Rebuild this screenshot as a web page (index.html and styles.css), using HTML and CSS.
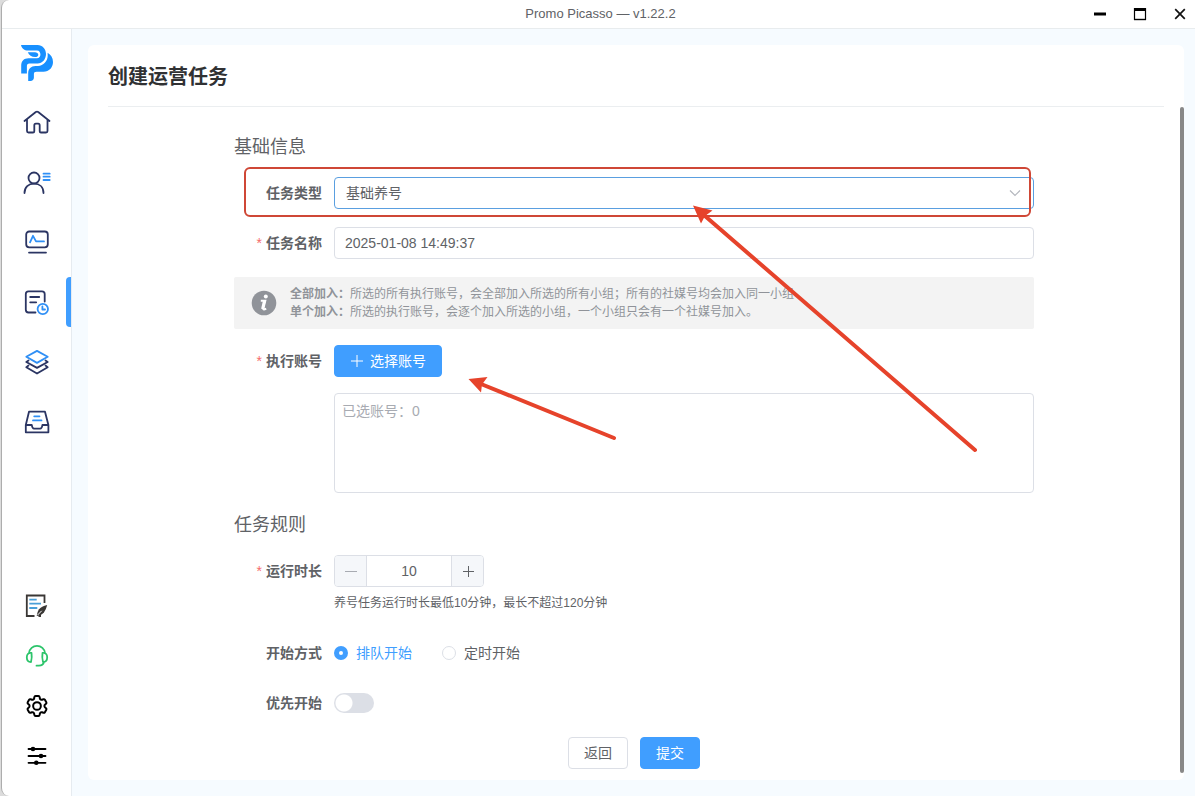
FILE: index.html
```html
<!DOCTYPE html>
<html lang="zh-CN">
<head>
<meta charset="utf-8">
<title>Promo Picasso</title>
<link rel="stylesheet" href="styles.css">
</head>
<body>
<div class="app">
  <header class="titlebar">
    <span class="titlebar-name">Promo Picasso — v1.22.2</span>
    <div class="window-controls">
      <button type="button" aria-label="最小化"><svg width="14" height="14" viewBox="0 0 14 14"><path d="M1 7h12" stroke="#000" stroke-width="3"/></svg></button>
      <button type="button" aria-label="最大化"><svg width="14" height="14" viewBox="0 0 14 14"><path d="M1.500 1v12M12.500 1v12" stroke="#000" stroke-width="1.200"/><path d="M1 12.500h12" stroke="#000" stroke-width="1.400"/><path d="M1 2.500h12" stroke="#000" stroke-width="3"/></svg></button>
      <button type="button" aria-label="关闭"><svg width="14" height="14" viewBox="0 0 14 14"><path d="M2.200 2.200l9.600 9.600M11.800 2.200l-9.600 9.600" stroke="#111" stroke-width="1.700"/></svg></button>
    </div>
  </header>
  <div class="workspace">
    <aside class="sidebar">
      <div class="logo">
        <svg width="34" height="38" viewBox="-1 -1 34 38">
          <g fill="#1890ff">
            <path d="M0 0H16.500C21.500 0 25 4 25 9S21.500 18.500 16.500 18.500H8.500C6.600 18.500 5.900 19.500 5.900 21V28.500H.2V20.500C.2 16 3 13.200 7.500 13.200H16C18.300 13.200 19.400 11.300 19.400 9.400S18.300 5.600 16 5.600H7C3.500 5.600 .6 3.500 0 0Z"/>
            <path d="M6.800 7.200H14C15.600 7.200 17.300 8.200 17.300 9.700S15.700 12 14.200 12C10.500 12 8 10.400 6.800 7.200Z"/>
            <path d="M26.600 7.800C29.900 9.700 32 13 32 17C32 22.500 28 26.700 22.500 26.700H15.500C13.700 26.700 12.900 27.500 12.900 29V32.500C12.900 34.500 11.500 36 9.500 36H7.200V28.500C7.200 24 10 21.100 14.500 21.100H17C22.500 20.800 26.500 16 26.700 11Z"/>
          </g>
        </svg>
      </div>
      <nav class="nav" aria-label="主导航">
        <a href="#home" aria-label="首页"><svg class="icon" viewBox="0 0 28 28"><path d="M1.500 13L12.800 4Q14 3.200 15.200 4L26.500 13M4 11.500V23Q4 24.500 5.500 24.500H10Q11.300 24.500 11.300 23.200V17.500Q11.300 15.700 12.800 15.700H15.200Q16.700 15.700 16.700 17.500V23.200Q16.700 24.500 18 24.500H23Q24.500 24.500 24.500 23V11.500"/></svg></a>
        <a href="#accounts" aria-label="账号"><svg class="icon" viewBox="0 0 28 28"><circle cx="11" cy="10" r="5.500"/><path d="M1.500 25C1.500 19 5.500 15.700 11 15.700S20.500 19 20.500 25"/><path class="accent" d="M20.500 5.700h6.200M20.500 8.700h6.200M20.500 12h6.200"/></svg></a>
        <a href="#monitor" aria-label="监控"><svg class="icon" viewBox="0 0 28 28"><rect x="3.200" y="3.500" width="21.600" height="15.800" rx="3"/><path d="M6 24.600h17"/><path class="accent" d="M7 14.300L10 7.800L13 13.400H21"/></svg></a>
        <a href="#tasks" aria-label="任务" class="active" aria-current="page"><svg class="icon" viewBox="0 0 28 28"><path d="M21.700 13.500V6Q21.700 3.300 19 3.300H5.500Q2.800 3.300 2.800 6V21.800Q2.800 24.500 5.500 24.500H12.500M7.200 9h9M7.200 14.300h6"/><g class="accent"><circle cx="19.800" cy="21" r="5.200"/><path d="M19.400 18.400V21.500H22"/></g></svg></a>
        <a href="#layers" aria-label="分组"><svg class="icon" viewBox="0 0 28 28"><path d="M5.500 12.500L3.300 14L14 19.900L24.700 14L22.500 12.500M5.500 17.600L3.300 19.200L14 25.500L24.700 19.200L22.500 17.600"/><path class="accent" d="M14 2.900L24.700 8.700L14 14.900L3.300 8.700Z"/></svg></a>
        <a href="#inbox" aria-label="素材"><svg class="icon" viewBox="0 0 28 28"><path d="M6 3.700H22L25.400 17V24.300H2.800V17ZM2.800 17H8.800Q9.300 20.700 11 20.700H17.200Q18.900 20.700 19.400 17H25.400"/><path class="accent" d="M11.200 8.300H16.500M10 12.400H18.500"/></svg></a>
      </nav>
      <nav class="nav-tools" aria-label="工具">
        <a href="#notes" aria-label="记录"><svg class="icon note" viewBox="0 0 28 28"><path d="M21.500 11V3.500H3.800V24H11.500M15.500 24H18"/><path class="note-lines" d="M6.300 7.700H13.700M6.300 11.700H18M6.300 16H14.300"/><path d="M24.200 13Q18.500 14 15.800 17.500Q14.300 19.800 13.600 24Q18.500 23.400 20.800 20.700Q23 18 24.200 13Z" fill="#3a3735" stroke="none"/><path d="M14.600 23L18.700 18.800" stroke="#fff" stroke-width="1"/></svg></a>
        <a href="#support" aria-label="客服"><svg class="icon support" viewBox="0 0 28 28"><path d="M6 11C6.500 6.800 9.800 3.800 14 3.800S21.500 6.800 22 11M8.500 11Q3.800 10.500 3.800 15.200Q3.800 20 8 20Q9.200 15.500 8.500 11ZM19.500 11Q24.200 10.500 24.200 15.200Q24.200 20 20 20Q18.800 15.500 19.500 11ZM21 20Q20 23.700 16 23.700H13.500"/></svg></a>
        <a href="#settings" aria-label="设置"><svg class="icon black" viewBox="-0.700 -0.700 25.400 25.400"><path d="M9.594 3.940c.09-.542.56-.94 1.110-.94h2.593c.55 0 1.020.398 1.110.94l.213 1.281c.063.374.313.686.645.87.074.04.147.083.22.127.325.196.72.257 1.075.124l1.217-.456a1.125 1.125 0 0 1 1.370.49l1.296 2.247a1.125 1.125 0 0 1-.26 1.431l-1.003.827c-.293.241-.438.613-.43.992a7.723 7.723 0 0 1 0 .255c-.008.378.137.75.43.991l1.004.827c.424.35.534.955.26 1.430l-1.298 2.247a1.125 1.125 0 0 1-1.369.491l-1.217-.456c-.355-.133-.75-.072-1.076.124a6.470 6.470 0 0 1-.22.128c-.331.183-.581.495-.644.869l-.213 1.281c-.09.543-.56.94-1.110.94h-2.594c-.55 0-1.019-.398-1.110-.94l-.213-1.281c-.062-.374-.312-.686-.644-.87a6.520 6.520 0 0 1-.22-.127c-.325-.196-.72-.257-1.076-.124l-1.217.456a1.125 1.125 0 0 1-1.369-.49l-1.297-2.247a1.125 1.125 0 0 1 .26-1.431l1.004-.827c.292-.24.437-.613.43-.991a6.932 6.932 0 0 1 0-.255c.007-.38-.138-.751-.43-.992l-1.004-.827a1.125 1.125 0 0 1-.26-1.430l1.297-2.247a1.125 1.125 0 0 1 1.370-.491l1.216.456c.356.133.751.072 1.076-.124.072-.044.146-.086.22-.128.332-.183.582-.495.644-.869l.214-1.280Z"/><circle cx="12" cy="12" r="3.500"/></svg></a>
        <a href="#filters" aria-label="选项"><svg class="icon black" viewBox="0 0 28 28"><path d="M5.500 7H22.500M5.500 14H22.500M5.500 20.800H22.500"/><g fill="#000" stroke="none"><circle cx="10" cy="7" r="2.300"/><circle cx="18" cy="14" r="2.300"/><circle cx="13.300" cy="20.800" r="2.300"/></g></svg></a>
      </nav>
    </aside>
    <main class="main">
      <section class="card">
        <h1 class="card-title">创建运营任务</h1>
        <div class="card-body">
          <div class="form-area">
            <form class="form">
              <h2 class="section-title">基础信息</h2>
              <div class="row">
                <label class="label" for="type">任务类型</label>
                <div class="select-wrap">
                  <select class="field select" id="type"><option>基础养号</option></select>
                  <svg class="chevron" width="14" height="14" viewBox="0 0 14 14"><path d="M2 4.500L7 9.500L12 4.500" fill="none" stroke="#b4b7be" stroke-width="1.200"/></svg>
                </div>
              </div>
              <div class="row">
                <label class="label required" for="name">任务名称</label>
                <input class="field" id="name" type="text" value="2025-01-08 14:49:37">
              </div>
              <div class="notice">
                <svg class="notice-icon" width="26" height="26" viewBox="0 0 26 26"><circle cx="13" cy="13" r="12.300" fill="#909399"/><circle cx="14.800" cy="6.500" r="2" fill="#fff"/><path d="M9.800 10.800H14.300L12.300 18.800Q12.200 20.300 15.200 18.700" fill="none" stroke="#fff" stroke-width="2"/><path d="M13.300 11L11.500 19" stroke="#fff" stroke-width="2.800"/></svg>
                <div>
                  <p><strong>全部加入：</strong>所选的所有执行账号，会全部加入所选的所有小组；所有的社媒号均会加入同一小组</p>
                  <p><strong>单个加入：</strong>所选的执行账号，会逐个加入所选的小组，一个小组只会有一个社媒号加入。</p>
                </div>
              </div>
              <div class="row row-top">
                <label class="label required" for="accounts-list">执行账号</label>
                <div class="stack">
                  <button class="btn btn-primary" type="button"><svg width="14" height="14" viewBox="0 0 14 14"><path d="M7 1V13M1 7H13" stroke="#fff" stroke-width="1"/></svg>选择账号</button>
                  <textarea class="field accounts" id="accounts-list" readonly placeholder="已选账号：0"></textarea>
                </div>
              </div>
              <h2 class="section-title">任务规则</h2>
              <div class="row row-top row-duration">
                <label class="label required" for="duration">运行时长</label>
                <div>
                  <div class="stepper">
                    <button type="button" aria-label="减少" disabled><svg width="14" height="14" viewBox="0 0 14 14"><path d="M1 7.500H13" stroke="#a8abb2"/></svg></button>
                    <input id="duration" type="text" inputmode="numeric" value="10">
                    <button type="button" aria-label="增加"><svg width="14" height="14" viewBox="0 0 14 14"><path d="M2 7.500H13M7.500 2V13" stroke="#606266"/></svg></button>
                  </div>
                  <p class="hint">养号任务运行时长最低10分钟，最长不超过120分钟</p>
                </div>
              </div>
              <div class="row" role="radiogroup" aria-labelledby="start-label">
                <span class="label" id="start-label">开始方式</span>
                <label class="radio"><input type="radio" name="start" checked><span>排队开始</span></label>
                <label class="radio"><input type="radio" name="start"><span>定时开始</span></label>
              </div>
              <div class="row">
                <label class="label" for="priority">优先开始</label>
                <input class="switch" id="priority" type="checkbox" role="switch">
              </div>
              <div class="actions">
                <button class="btn" type="button">返回</button>
                <button class="btn btn-primary" type="submit">提交</button>
              </div>
              <div class="highlight"></div>
              <svg class="arrows" width="800" height="400" viewBox="0 0 800 400" aria-hidden="true">
                <g stroke="#e6432b" stroke-width="4" stroke-linecap="round"><path d="M471 109L741 343"/><path d="M247 277L380 331"/></g>
                <g fill="#e6432b"><path d="M459 98.500L478.500 103.500L471 109L467 116.500Z"/><path d="M234.500 272L253.500 270L248 277.500L247 285.500Z"/></g>
              </svg>
            </form>
          </div>
          <div class="scrollbar"></div>
        </div>
      </section>
    </main>
  </div>
</div>
</body>
</html>
```
FILE: styles.css
```css
* { box-sizing: border-box; }

body {
  margin: 0;
  padding-left: 1px;
  background: #dcdcdc;
  color: #606266;
  font: 14px/20px "Liberation Sans", "Noto Sans CJK SC", sans-serif;
}

h1, h2, p { margin: 0; }
button, input, select, textarea { font: inherit; color: inherit; }
svg { display: block; }

.app {
  display: flex;
  flex-direction: column;
  min-height: 100vh;
  overflow: hidden;
  background: #fff;
  border-left: 1px solid #adadad;
  border-radius: 8px 0 0 8px;
}

.titlebar {
  display: grid;
  grid-template-columns: 1fr auto 1fr;
  align-items: center;
  height: 29px;
  padding-left: 4px;
  border-bottom: 1px solid #e8ecee;
  font-size: 13px;
}
.titlebar-name { grid-column: 2; }
.window-controls { display: flex; justify-content: flex-end; gap: 10px; }
.window-controls button {
  display: grid;
  place-items: center;
  width: 30px;
  height: 28px;
  padding: 0;
  border: 0;
  background: none;
}

.workspace { display: flex; flex: 1; }

.sidebar {
  display: flex;
  flex-direction: column;
  flex: none;
  width: 70px;
  padding-bottom: 15px;
  box-shadow: inset -1px 0 #e6ebf0;
}
.logo { padding: 15px 0 10px 18px; }
.nav a, .nav-tools a {
  position: relative;
  display: grid;
  place-items: center;
  height: 60px;
}
.nav-tools { margin-top: auto; }
.nav-tools a { height: 50px; }
.nav .active::after {
  content: "";
  position: absolute;
  top: 5px;
  right: 1px;
  width: 5px;
  height: 50px;
  border-radius: 4px 0 0 4px;
  background: #409eff;
}

.icon {
  width: 28px;
  height: 28px;
  fill: none;
  stroke: #2b3563;
  stroke-width: 1.8;
  stroke-linecap: round;
  stroke-linejoin: round;
}
.icon .accent { stroke: #2f8ff5; }
.icon.note { stroke: #3a3735; stroke-linecap: butt; stroke-linejoin: miter; }
.icon .note-lines { stroke: #4a9fd8; }
.icon.support { stroke: #2dc46b; }
.icon.black { stroke: #000; }

.main {
  display: flex;
  flex: 1;
  padding: 16px 11px 16px 16px;
  background: #f6fbff;
}
.card {
  display: flex;
  flex: 1;
  flex-direction: column;
  border-radius: 6px;
  background: #fff;
}
.card-title {
  margin: 0 20px;
  padding-top: 3px;
  border-bottom: 1px solid #ebeef0;
  color: #303133;
  font-size: 20px;
  line-height: 58px;
}
.card-body { display: flex; flex: 1; }
.form-area { flex: 1; }
.scrollbar {
  width: 4px;
  margin-bottom: 7px;
  border-radius: 2px;
  background: #888;
}

.form {
  position: relative;
  max-width: 800px;
  margin: 0 auto;
  padding-top: 28px;
}
.section-title {
  margin-bottom: 18px;
  font-size: 18px;
  font-weight: 400;
  line-height: 24px;
}
.row {
  display: flex;
  align-items: center;
  min-height: 32px;
  margin-bottom: 18px;
}
.row-top { align-items: flex-start; margin-bottom: 20px; }
.row-duration { margin-bottom: 24px; }
.label {
  flex: none;
  width: 100px;
  padding-right: 12px;
  font-weight: 700;
  line-height: 32px;
  text-align: right;
}
.required::before {
  content: "*";
  margin-right: 4px;
  color: #f56c6c;
  font-weight: 400;
}

.field {
  width: 100%;
  height: 32px;
  padding: 0 10px;
  border: 1px solid #dcdfe6;
  border-radius: 4px;
  outline: 0;
  background: #fff;
}
.select-wrap { position: relative; flex: 1; }
.select {
  display: block;
  padding: 0 11px;
  border-color: #5a9fe0;
  appearance: none;
}
.chevron {
  position: absolute;
  top: 9px;
  right: 12px;
  pointer-events: none;
}

.notice {
  display: flex;
  align-items: center;
  gap: 13px;
  margin-bottom: 16px;
  padding: 8px 17px;
  border-radius: 2px;
  background: #f3f3f3;
  color: #909399;
  font-size: 12px;
  line-height: 18px;
}
.notice-icon { flex: none; }

.stack {
  display: flex;
  flex: 1;
  flex-direction: column;
  align-items: flex-start;
  gap: 16px;
}
.accounts {
  height: 100px;
  padding: 7px;
  resize: none;
}
.accounts::placeholder { color: #a8abb2; }

.btn {
  display: inline-flex;
  align-items: center;
  gap: 6px;
  height: 32px;
  padding: 0 15px;
  border: 1px solid #dcdfe6;
  border-radius: 4px;
  background: #fff;
}
.btn-primary {
  border-color: #409eff;
  background: #409eff;
  color: #fff;
}

.stepper {
  display: flex;
  width: 150px;
  height: 32px;
  overflow: hidden;
  border: 1px solid #dcdfe6;
  border-radius: 4px;
}
.stepper button {
  display: grid;
  place-items: center;
  flex: none;
  width: 31px;
  padding: 0;
  border: 0;
  background: #f5f7fa;
}
.stepper input {
  flex: 1;
  min-width: 0;
  padding: 0;
  border: solid #dcdfe6;
  border-width: 0 1px;
  outline: 0;
  text-align: center;
}
.hint { margin-top: 6px; font-size: 12px; }

.radio {
  display: flex;
  align-items: center;
  gap: 8px;
  margin-right: 30px;
}
.radio input {
  width: 14px;
  height: 14px;
  margin: 0;
  border: 1px solid #dcdfe6;
  border-radius: 50%;
  background: #fff;
  appearance: none;
}
.radio input:checked { border: 5px solid #409eff; }
.radio input:checked + span { color: #409eff; }

.switch {
  width: 40px;
  height: 20px;
  margin: 0;
  border-radius: 10px;
  background: radial-gradient(circle at 10px 10px, #fff 8px, transparent 9px) #dcdfe6;
  appearance: none;
}

.actions { display: flex; justify-content: center; gap: 12px; }

.highlight {
  position: absolute;
  top: 60px;
  right: 3px;
  left: 10px;
  height: 50px;
  border: 2px solid #cf4736;
  border-radius: 6px;
  pointer-events: none;
}
.arrows {
  position: absolute;
  top: 0;
  left: 0;
  pointer-events: none;
}
```
